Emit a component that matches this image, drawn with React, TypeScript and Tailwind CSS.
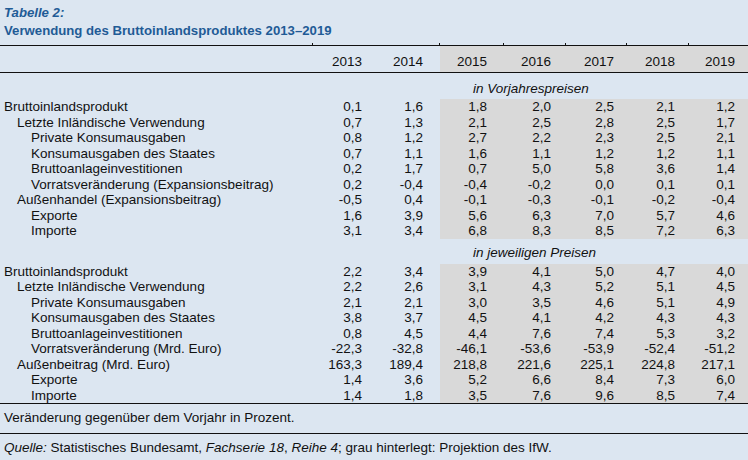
import React from "react";

type Row = { label: string; level: 0 | 1 | 2; values: string[] };

const years = ["2013", "2014", "2015", "2016", "2017", "2018", "2019"];

// right padding per year column, so the numbers line up like the original
const pads = ["pr-[16px]", "pr-[17px]", "pr-[17px]", "pr-[15px]", "pr-[13px]", "pr-[14px]", "pr-[13px]"];

const indent = ["pl-[4px]", "pl-[17px]", "pl-[31px]"];

const real: Row[] = [
  { label: "Bruttoinlandsprodukt", level: 0, values: ["0,1", "1,6", "1,8", "2,0", "2,5", "2,1", "1,2"] },
  { label: "Letzte Inländische Verwendung", level: 1, values: ["0,7", "1,3", "2,1", "2,5", "2,8", "2,5", "1,7"] },
  { label: "Private Konsumausgaben", level: 2, values: ["0,8", "1,2", "2,7", "2,2", "2,3", "2,5", "2,1"] },
  { label: "Konsumausgaben des Staates", level: 2, values: ["0,7", "1,1", "1,6", "1,1", "1,2", "1,2", "1,1"] },
  { label: "Bruttoanlageinvestitionen", level: 2, values: ["0,2", "1,7", "0,7", "5,0", "5,8", "3,6", "1,4"] },
  { label: "Vorratsveränderung (Expansionsbeitrag)", level: 2, values: ["0,2", "-0,4", "-0,4", "-0,2", "0,0", "0,1", "0,1"] },
  { label: "Außenhandel (Expansionsbeitrag)", level: 1, values: ["-0,5", "0,4", "-0,1", "-0,3", "-0,1", "-0,2", "-0,4"] },
  { label: "Exporte", level: 2, values: ["1,6", "3,9", "5,6", "6,3", "7,0", "5,7", "4,6"] },
  { label: "Importe", level: 2, values: ["3,1", "3,4", "6,8", "8,3", "8,5", "7,2", "6,3"] },
];

const nominal: Row[] = [
  { label: "Bruttoinlandsprodukt", level: 0, values: ["2,2", "3,4", "3,9", "4,1", "5,0", "4,7", "4,0"] },
  { label: "Letzte Inländische Verwendung", level: 1, values: ["2,2", "2,6", "3,1", "4,3", "5,2", "5,1", "4,5"] },
  { label: "Private Konsumausgaben", level: 2, values: ["2,1", "2,1", "3,0", "3,5", "4,6", "5,1", "4,9"] },
  { label: "Konsumausgaben des Staates", level: 2, values: ["3,8", "3,7", "4,5", "4,1", "4,2", "4,3", "4,3"] },
  { label: "Bruttoanlageinvestitionen", level: 2, values: ["0,8", "4,5", "4,4", "7,6", "7,4", "5,3", "3,2"] },
  { label: "Vorratsveränderung (Mrd. Euro)", level: 2, values: ["-22,3", "-32,8", "-46,1", "-53,6", "-53,9", "-52,4", "-51,2"] },
  { label: "Außenbeitrag (Mrd. Euro)", level: 1, values: ["163,3", "189,4", "218,8", "221,6", "225,1", "224,8", "217,1"] },
  { label: "Exporte", level: 2, values: ["1,4", "3,6", "5,2", "6,6", "8,4", "7,3", "6,0"] },
  { label: "Importe", level: 2, values: ["1,4", "1,8", "3,5", "7,6", "9,6", "8,5", "7,4"] },
];

const grid = "grid grid-cols-[313px_65px_62px_64px_62px_61px_62px_59px]";

const DataRow = ({ row }: { row: Row }) => (
  <div className={`${grid} h-[15.5px] leading-[15.5px]`}>
    <div className={`${indent[row.level]} whitespace-nowrap`}>{row.label}</div>
    {row.values.map((v, i) => (
      <div key={i} className={`text-right ${pads[i]} ${i >= 2 ? "bg-[#d9d9d9]" : ""}`}>
        {v}
      </div>
    ))}
  </div>
);

const SectionHead = ({ text, h }: { text: string; h: string }) => (
  <div className={`${grid} ${h} items-end pb-[3px] leading-[15.5px]`}>
    <div className="col-start-4 col-span-5 pl-[33px] italic whitespace-nowrap">{text}</div>
  </div>
);

export default function App() {
  return (
    <div className="w-[748px] h-[460px] overflow-hidden bg-[#dce6f1] text-[13.5px] text-[#111] font-['Liberation_Sans',Arial,sans-serif]">
      <div className="h-[45px] pt-[4px] pl-[4px] text-[13.2px] font-bold text-[#1f5b96] leading-[18px]">
        <div className="italic">Tabelle 2:</div>
        <div>Verwendung des Bruttoinlandsproduktes 2013–2019</div>
      </div>

      <div className={`${grid} h-[28px] border-y border-[#111] items-end leading-[15.5px]`}>
        <div className="relative h-full">
          <span className="absolute right-0 -top-[3px] w-px h-[2px] bg-[#111]" />
        </div>
        {years.map((y, i) => (
          <div
            key={y}
            className={`relative h-full flex items-end justify-end pb-[3px] ${pads[i]} ${i >= 2 ? "bg-[#d9d9d9]" : ""}`}
          >
            {i >= 1 && i < 6 && <span className="absolute right-0 -top-[3px] w-px h-[2px] bg-[#111]" />}
            {y}
          </div>
        ))}
      </div>

      <SectionHead text="in Vorjahrespreisen" h="h-[26px]" />
      {real.map((r) => (
        <DataRow key={"r" + r.label} row={r} />
      ))}

      <SectionHead text="in jeweiligen Preisen" h="h-[25px]" />
      {nominal.map((r) => (
        <DataRow key={"n" + r.label} row={r} />
      ))}

      <div className="h-[31px] border-y border-[#111] flex items-center pl-[4px]">
        Veränderung gegenüber dem Vorjahr in Prozent.
      </div>
      <div className="h-[26px] flex items-center pl-[4px] pt-[2px]">
        <span>
          <i>Quelle:</i> Statistisches Bundesamt, <i>Fachserie 18</i>, <i>Reihe 4</i>; grau hinterlegt: Projektion des IfW.
        </span>
      </div>
    </div>
  );
}
